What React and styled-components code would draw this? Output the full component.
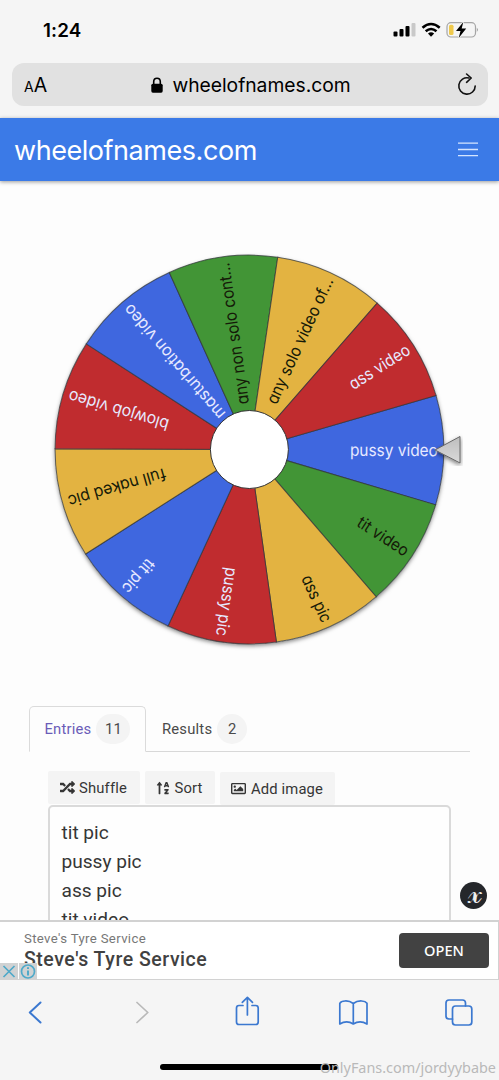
import React from 'react'
import styled, { createGlobalStyle } from 'styled-components'
import { FaRandom, FaSortAlphaUp, FaRegImage } from 'react-icons/fa'

const GlobalStyle = createGlobalStyle`
    * {
        box-sizing: border-box;
    }

    body {
        margin: 0;
        background: #fdfdfd;
        font-family: Inter, 'Liberation Sans', sans-serif;
    }
`

const Screen = styled.div`
    position: relative;
    display: flex;
    flex-direction: column;
    width: 499px;
    height: 1080px;
    overflow: hidden;
`

const StatusBar = styled.div`
    display: flex;
    justify-content: space-between;
    height: 63px;
    padding: 20px 21px 0 43px;
    background: #f5f5f5;
`

const Time = styled.span`
    padding-top: 1px;
    font-size: 18.8px;
    font-weight: 600;
    line-height: 20px;
    letter-spacing: 0.1px;
`

const AddressRow = styled.div`
    height: 55px;
    padding: 0 11px 0 12px;
    background: #f5f5f5;
`

const Address = styled.div`
    display: flex;
    align-items: center;
    justify-content: space-between;
    height: 43px;
    padding: 0 11px 0 12px;
    border-radius: 12px;
    background: #e1e1e1;
`

const TextSize = styled.span`
    width: 30px;
    padding-top: 1px;
    font-size: 19.5px;
    letter-spacing: 0;

    small {
        font-size: 14px;
    }
`

const Url = styled.span`
    display: flex;
    align-items: center;
    gap: 9px;
    margin-left: -9px;
    padding-top: 1px;
    font-size: 19.3px;
    letter-spacing: -0.03px;
`

const Header = styled.header`
    position: relative;
    display: flex;
    flex: none;
    align-items: center;
    justify-content: space-between;
    height: 63px;
    padding: 0 21px 0 14px;
    background: #3b7ae7;
    color: #fff;
    box-shadow: 0 1px 4px rgba(0, 0, 0, 0.4);
`

const Title = styled.h1`
    margin: 0;
    padding-top: 1px;
    font-size: 27px;
    font-weight: 380;
    letter-spacing: -0.45px;
`

const Main = styled.main`
    display: flex;
    flex-direction: column;
    height: 739px;
    overflow: hidden;
`

const WheelBox = styled.div`
    height: 525px;
    flex: none;

    svg {
        display: block;
    }
`

const Label = styled.text`
    font-family: Inter, sans-serif;
    font-size: 16.8px;
    font-weight: 370;
    font-feature-settings: 'cv11';
    fill: ${props => (props.$dark ? '#151a08' : '#e7e9ff')};
    text-anchor: end;
`

const Tabs = styled.div`
    display: flex;
    flex: none;
    height: 46px;
    margin: 0 29px;
    border-bottom: 1px solid #d8d8d8;
`

const Tab = styled.div`
    display: flex;
    align-items: center;
    gap: 5px;
    height: 46px;
    width: ${props => (props.$active ? '117px' : '120px')};
    padding-left: ${props => (props.$active ? '14.5px' : '15px')};
    border: 1px solid ${props => (props.$active ? '#dbdbdb' : 'transparent')};
    border-bottom-color: ${props => (props.$active ? '#fdfdfd' : 'transparent')};
    border-radius: 5px 5px 0 0;
    color: ${props => (props.$active ? '#6b5cb8' : '#4a4a4a')};
    font-family: Roboto, sans-serif;
    font-size: 14.8px;
    letter-spacing: 0.2px;
`

const Count = styled.span`
    display: flex;
    align-items: center;
    justify-content: center;
    width: ${props => props.$width};
    height: 30px;
    border-radius: 15px;
    background: #f4f4f4;
    color: #4a4a4a;
    letter-spacing: 0;
`

const Buttons = styled.div`
    display: flex;
    flex: none;
    gap: 5px;
    height: 53px;
    padding: 19px 48px 0;
`

const Button = styled.div`
    display: flex;
    align-items: center;
    justify-content: center;
    gap: ${props => props.$gap || '4px'};
    width: ${props => props.$width};
    height: 33px;
    padding-right: 1px;
    margin-top: ${props => props.$top || '0'};
    border-radius: 2px;
    background: #f4f4f4;
    color: #363636;
    font-family: Roboto, sans-serif;
    font-size: 14.8px;
    letter-spacing: 0.15px;
`

const Entries = styled.div`
    flex: none;
    width: 403px;
    height: 160px;
    margin-left: 48px;
    padding: 11px 11.5px;
    border: 2px solid #dadada;
    border-radius: 5px;
    background: #fefefe;
    color: #363636;
    font-family: Roboto, sans-serif;
    font-size: 19.1px;
    line-height: 29px;
`

const Ad = styled.div`
    position: relative;
    display: flex;
    flex: none;
    align-items: center;
    justify-content: space-between;
    height: 60px;
    padding: 0 9px 0 24px;
    border: 1px solid #d2d2d2;
    border-top-width: 2px;
    border-left: 0;
    background: #fff;
`

const AdText = styled.div`
    display: flex;
    flex-direction: column;
    font-family: Roboto, sans-serif;
`

const AdSmall = styled.span`
    color: #777;
    font-size: 13.2px;
    line-height: 18px;
    letter-spacing: 0.35px;
`

const AdTitle = styled.span`
    color: #414141;
    font-size: 19.5px;
    font-weight: 500;
    line-height: 23px;
    letter-spacing: 0.53px;
`

const OpenButton = styled.div`
    display: flex;
    align-items: center;
    justify-content: center;
    width: 90px;
    height: 35px;
    padding-bottom: 2px;
    border-radius: 4px;
    background: #424242;
    color: #fff;
    font-family: 'Noto Sans', sans-serif;
    font-size: 14.6px;
    font-weight: 500;
`

const AdMarks = styled.svg`
    position: absolute;
    left: 0;
    bottom: 0;
`

const Badge = styled.div`
    position: absolute;
    left: 460px;
    top: 882px;
    display: flex;
    align-items: center;
    justify-content: center;
    width: 27px;
    height: 27px;
    padding: 0 0 5px 2px;
    border-radius: 50%;
    background: #25272b;
    color: #eee;
    font-family: 'DejaVu Serif', 'DejaVu Sans', serif;
    font-size: 30px;
    line-height: 1;
`

const Toolbar = styled.nav`
    display: flex;
    flex: none;
    justify-content: space-between;
    height: 100px;
    padding: 15px 26px 0 27px;
    background: #f5f5f5;
    color: #3b78d0;
`

const HomeBar = styled.div`
    position: absolute;
    left: 160px;
    top: 1064px;
    width: 178px;
    height: 6px;
    border-radius: 3px;
    background: #000;
`

const Watermark = styled.div`
    position: absolute;
    right: 3px;
    top: 1058px;
    color: #b9b9b9;
    font-family: 'Noto Sans', sans-serif;
    font-size: 14.4px;
    line-height: 20px;
    white-space: nowrap;
`

const BLUE = '#3f67df'
const GREEN = '#429536'
const YELLOW = '#e3b341'
const RED = '#c02c2f'

// length is the run of the label along the radius
const slices = [
    { name: 'pussy video', color: BLUE, length: 88 },
    { name: 'tit video', color: GREEN, length: 58 },
    { name: 'ass pic', color: YELLOW, length: 50 },
    { name: 'pussy pic', color: RED, length: 69 },
    { name: 'tit pic', color: BLUE, length: 40 },
    { name: 'full naked pic', color: YELLOW, length: 101 },
    { name: 'blowjob video', color: RED, length: 104 },
    { name: 'masturbation video', color: BLUE, length: 146 },
    { name: 'any non solo cont...', color: GREEN, length: 143 },
    { name: 'any solo video of...', color: YELLOW, length: 137 },
    { name: 'ass video', color: RED, length: 69 },
]

const STEP = 360 / slices.length
const RADIUS = 194.3

const point = angle => {
    const rad = (angle * Math.PI) / 180
    return `${RADIUS * Math.cos(rad)} ${RADIUS * Math.sin(rad)}`
}

const Wheel = () => (
    <svg width="499" height="525" viewBox="0 0 499 525">
        <defs>
            <filter id="shade" x="-10%" y="-10%" width="120%" height="120%">
                <feDropShadow dx="0" dy="2" stdDeviation="2.2" floodOpacity="0.5" />
            </filter>
            <linearGradient id="silver" x1="0" y1="0" x2="0" y2="1">
                <stop offset="0" stopColor="#bdbdbd" />
                <stop offset="1" stopColor="#dadada" />
            </linearGradient>
        </defs>
        <g transform="translate(249.4 268.5)">
            <circle r={RADIUS} fill="#fff" filter="url(#shade)" />
            {slices.map((slice, i) => (
                <path
                    key={slice.name}
                    d={`M0 0L${point((i - 0.5) * STEP)}A${RADIUS} ${RADIUS} 0 0 1 ${point((i + 0.5) * STEP)}Z`}
                    transform="rotate(0.2)"
                    fill={slice.color}
                    stroke="#30353a"
                    strokeOpacity="0.75"
                    strokeWidth="1"
                />
            ))}
            {slices.map((slice, i) => (
                <g key={slice.name} transform={`rotate(${i * STEP + 0.2})`}>
                    <Label
                        x="188.500"
                        y="6"
                        $dark={slice.color === GREEN || slice.color === YELLOW}
                        textLength={slice.length}
                        lengthAdjust="spacingAndGlyphs"
                    >
                        {slice.name}
                    </Label>
                </g>
            ))}
            <circle r="39" fill="#fff" stroke="#333" strokeWidth="1" />
        </g>
        <path
            d="M435 269L460 255.500V282Z"
            fill="url(#silver)"
            stroke="#666"
            strokeWidth="1"
            filter="url(#shade)"
        />
    </svg>
)

const StatusIcons = () => (
    <svg width="87" height="20" viewBox="391 20 87 20">
        <rect x="393.500" y="31.500" width="4" height="5" rx="1" />
        <rect x="399.500" y="29" width="4" height="7.500" rx="1" />
        <rect x="405.500" y="26" width="4" height="10.500" rx="1" />
        <rect x="411.500" y="23" width="4" height="13.500" rx="1" fill="#c9c9c9" />
        <g fill="none" stroke="#000" strokeWidth="2.600">
            <path d="M422.500 27.700Q431 20.300 439.700 27.700" />
            <path d="M425.700 31.300Q431 26.700 436.500 31.300" />
        </g>
        <path d="M428 33.500Q431 31 434.200 33.500L431 36.700Z" />
        <rect x="447" y="22.700" width="28.500" height="14.300" rx="4" fill="none" stroke="#a5a5a5" strokeWidth="1.200" />
        <rect x="449" y="24.700" width="4.500" height="10.300" rx="1.500" fill="#efc94c" />
        <path d="M476.800 27.700Q479 29.800 476.800 32Z" fill="#999" />
        <path
            d="M463.300 22L456 31H460.500L458.700 38L466.200 28.500H461.700Z"
            stroke="#f5f5f5"
            strokeWidth="1.600"
            paintOrder="stroke"
        />
    </svg>
)

const LockIcon = () => (
    <svg width="12" height="17" viewBox="0 0 12 17">
        <rect x="0.300" y="6.700" width="11.400" height="9" rx="1.600" />
        <path d="M2.700 8V4.700Q2.700 1.200 6 1.200T9.300 4.700V8" fill="none" stroke="#000" strokeWidth="1.600" />
    </svg>
)

const ReloadIcon = () => (
    <svg width="20" height="24" viewBox="0 0 20 24" fill="none" stroke="#111" strokeWidth="1.600">
        <path d="M12 5A8.200 8.200 0 1 0 18.200 13" strokeLinecap="round" />
        <path d="M9.600 1L14.200 5L9.600 9.300" strokeLinecap="round" strokeLinejoin="round" />
    </svg>
)

const ToolbarIcons = () => (
    <svg
        width="446"
        height="34"
        viewBox="27 995 446 34"
        fill="none"
        stroke="currentColor"
        strokeWidth="1.700"
        strokeLinecap="round"
        strokeLinejoin="round"
    >
        <path d="M40.500 1002.500L29.800 1012.500L40.500 1022.500" strokeWidth="2" />
        <path d="M137 1002.500L147.800 1012.500L137 1022.500" stroke="#b9b9b9" />
        <path d="M243 1005.500H239Q236.500 1005.500 236.500 1008V1022Q236.500 1024.500 239 1024.500H255.700Q258.200 1024.500 258.200 1022V1008Q258.200 1005.500 255.700 1005.500H252" />
        <path d="M247.400 1015V997.500M242.300 1002.300L247.400 997.300L252.500 1002.300" />
        <path d="M353.300 1003.500Q349.500 1000.700 345 1001Q341 1001.200 339.800 1003.300V1024Q346.700 1019.700 353.300 1024Q360 1019.700 367 1024V1003.300Q365.500 1001.200 361.700 1001Q357 1000.700 353.300 1003.500V1024" />
        <path d="M452.500 1019H449Q446 1019 446 1016V1003Q446 1000 449 1000H462.500Q465.500 1000 465.500 1003V1006" />
        <rect x="452.500" y="1006" width="19.300" height="19" rx="3" />
    </svg>
)

const App = () => (
    <Screen>
        <GlobalStyle />
        <StatusBar>
            <Time>1:24</Time>
            <StatusIcons />
        </StatusBar>
        <AddressRow>
            <Address>
                <TextSize>
                    <small>A</small>A
                </TextSize>
                <Url>
                    <LockIcon />
                    wheelofnames.com
                </Url>
                <ReloadIcon />
            </Address>
        </AddressRow>
        <Header>
            <Title>wheelofnames.com</Title>
            <svg width="20" height="15" viewBox="0 0 20 15" stroke="#d5e5ff" strokeWidth="1.300">
                <path d="M0 1.200H20M0 7.500H20M0 13.700H20" />
            </svg>
        </Header>
        <Main>
            <WheelBox>
                <Wheel />
            </WheelBox>
            <Tabs>
                <Tab $active>
                    Entries
                    <Count $width="34px">11</Count>
                </Tab>
                <Tab>
                    Results
                    <Count $width="30px">2</Count>
                </Tab>
            </Tabs>
            <Buttons>
                <Button $width="92px">
                    <FaRandom size={15} />
                    Shuffle
                </Button>
                <Button $width="70px">
                    <FaSortAlphaUp size={14} />
                    Sort
                </Button>
                <Button $width="115px" $top="1px" $gap="5px">
                    <FaRegImage size={15} />
                    Add image
                </Button>
            </Buttons>
            <Entries>
                <div>tit pic</div>
                <div>pussy pic</div>
                <div>ass pic</div>
                <div>tit video</div>
            </Entries>
        </Main>
        <Ad>
            <AdText>
                <AdSmall>Steve's Tyre Service</AdSmall>
                <AdTitle>Steve's Tyre Service</AdTitle>
            </AdText>
            <OpenButton>OPEN</OpenButton>
            <AdMarks width="38" height="16" viewBox="0 0 38 16" fill="none" stroke="#4fa9c9" strokeWidth="1.700">
                <rect width="18" height="16" fill="#d0d2d3" stroke="none" />
                <rect x="19" width="18" height="16" fill="#d0d2d3" stroke="none" />
                <path d="M3.500 3L14.500 14M14.500 3L3.500 14" />
                <circle cx="28" cy="8.500" r="6.500" />
                <path d="M28 7.500V12.500M28 4.300V6" strokeWidth="2" />
            </AdMarks>
        </Ad>
        <Toolbar>
            <ToolbarIcons />
        </Toolbar>
        <Badge>𝓍</Badge>
        <HomeBar />
        <Watermark>OnlyFans.com/jordyybabe</Watermark>
    </Screen>
)

export default App
